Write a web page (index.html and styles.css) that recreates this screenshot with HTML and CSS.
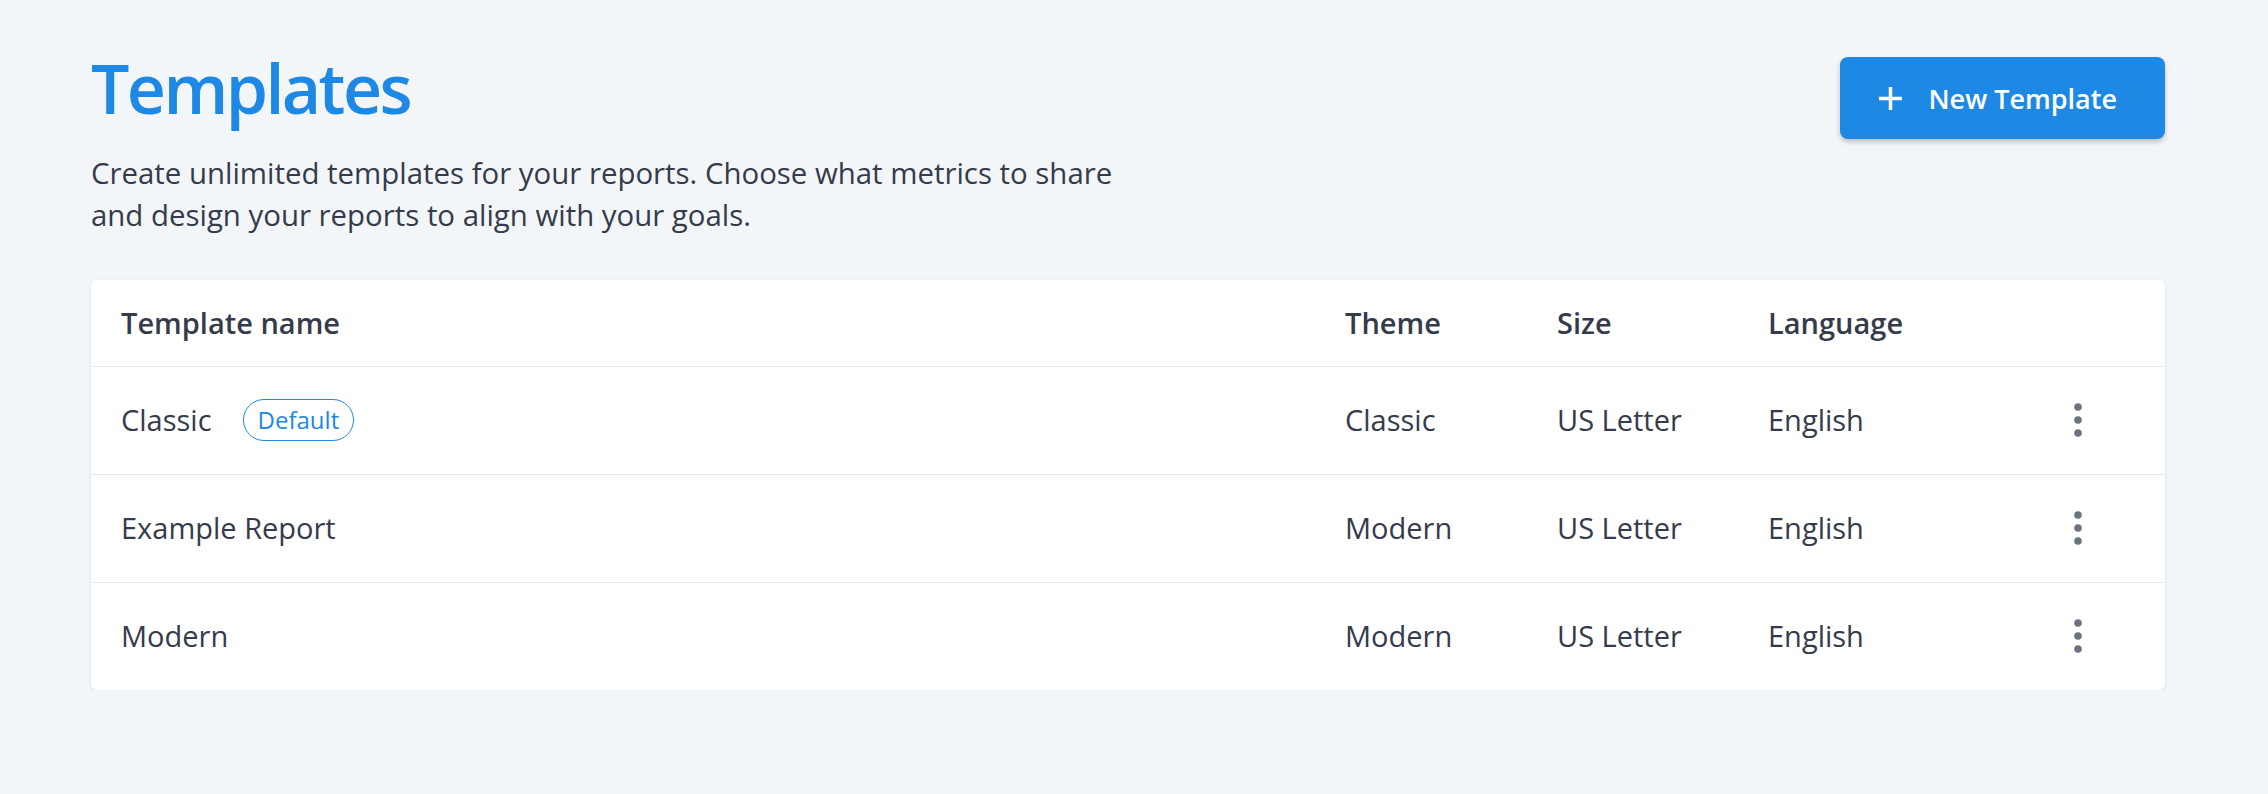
FILE: index.html
```html
<!DOCTYPE html>
<html lang="en">
<head>
    <meta charset="UTF-8">
    <meta name="viewport" content="width=device-width, initial-scale=1.0">
    <title>Templates</title>
    <link rel="stylesheet" href="styles.css">
</head>
<body>
    <main class="page">
        <div class="page-head">
            <div class="intro">
                <h1>Templates</h1>
                <p>Create unlimited templates for your reports. Choose what metrics to share and design your reports to align with your goals.</p>
            </div>
            <button class="new-btn">
                <svg class="plus" width="25" height="25" viewBox="0 0 25 25">
                    <path d="M12.5 1v23M1 12.5h23" stroke="#fff" stroke-width="3.5" fill="none"/>
                </svg>
                New Template
            </button>
        </div>

        <div class="card">
            <div class="row head">
                <div>Template name</div>
                <div>Theme</div>
                <div>Size</div>
                <div>Language</div>
                <div></div>
            </div>
            <div class="row">
                <div class="name">Classic <span class="badge">Default</span></div>
                <div>Classic</div>
                <div>US Letter</div>
                <div>English</div>
                <div class="actions">
                    <svg width="8" height="34" viewBox="0 0 8 34"><circle cx="4" cy="4" r="3.8"/><circle cx="4" cy="17" r="3.8"/><circle cx="4" cy="30" r="3.8"/></svg>
                </div>
            </div>
            <div class="row">
                <div class="name">Example Report</div>
                <div>Modern</div>
                <div>US Letter</div>
                <div>English</div>
                <div class="actions">
                    <svg width="8" height="34" viewBox="0 0 8 34"><circle cx="4" cy="4" r="3.8"/><circle cx="4" cy="17" r="3.8"/><circle cx="4" cy="30" r="3.8"/></svg>
                </div>
            </div>
            <div class="row">
                <div class="name">Modern</div>
                <div>Modern</div>
                <div>US Letter</div>
                <div>English</div>
                <div class="actions">
                    <svg width="8" height="34" viewBox="0 0 8 34"><circle cx="4" cy="4" r="3.8"/><circle cx="4" cy="17" r="3.8"/><circle cx="4" cy="30" r="3.8"/></svg>
                </div>
            </div>
        </div>
    </main>
</body>
</html>
```

FILE: styles.css
```css
/* Reset */
* {
    margin: 0;
    padding: 0;
    box-sizing: border-box;
}

body {
    font-family: 'Open Sans', 'Liberation Sans', sans-serif;
    background: #f3f6f9;
    color: #353b4b;
}

.page {
    width: 2074px;
    margin-left: 91px;
    padding-top: 47px;
}

/* Heading area */
.page-head {
    display: flex;
    justify-content: space-between;
    align-items: flex-start;
}

.intro h1 {
    font-size: 68px;
    font-weight: 600;
    line-height: 82px;
    letter-spacing: -2.6px;
    color: #1e88e5;
}

.intro p {
    margin-top: 23px;
    max-width: 1050px;
    font-size: 29.4px;
    line-height: 42px;
}

.new-btn {
    margin-top: 10px;
    display: flex;
    align-items: center;
    gap: 25px;
    height: 82px;
    padding: 0 48px 0 38px;
    background: #1e88e5;
    color: #fff;
    border: none;
    border-radius: 8px;
    font-family: inherit;
    font-size: 27px;
    font-weight: 600;
    box-shadow: 0 3px 5px rgba(0, 0, 0, 0.22);
    cursor: pointer;
}

/* Table card */
.card {
    margin-top: 44px;
    background: #fff;
    border-radius: 6px;
    box-shadow: 0 1px 3px rgba(0, 0, 0, 0.12);
}

.row {
    display: grid;
    grid-template-columns: 1fr 212px 211px 253px 114px;
    align-items: center;
    padding: 32px 30px 33px;
    font-size: 29px;
    line-height: 42px;
    border-bottom: 1px solid #e6e8ee;
}

.row:last-child {
    border-bottom: none;
}

.row.head {
    padding: 22px 30px;
    font-weight: 600;
}

.name {
    display: flex;
    align-items: center;
}

.badge {
    margin-left: 31px;
    padding: 0 14px;
    height: 42px;
    line-height: 39px;
    border: 1.5px solid #1e88e5;
    border-radius: 21px;
    color: #1e88e5;
    font-size: 24px;
}

.actions {
    display: flex;
    justify-content: center;
}

.actions svg {
    fill: #6b7280;
}
```
